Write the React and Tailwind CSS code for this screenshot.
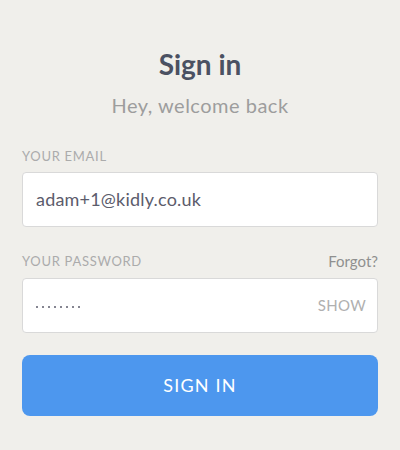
export default function App() {
  return (
    <div className="h-[450px] overflow-hidden bg-[#f0efeb] px-[22px] font-['Lato',sans-serif]">
      <div className="pt-[47px] text-center text-[28px] font-bold leading-[34px] text-[#4b5162]">Sign in</div>
      <div className="mt-[11px] text-center text-[20px] leading-[26px] tracking-[0.5px] text-[#9d9d9d]">Hey, welcome back</div>

      <div className="mt-[30px] text-[13px] leading-[16px] tracking-[0.7px] text-[#ababab]">YOUR EMAIL</div>
      <div className="mt-[8px] flex h-[55px] items-center rounded-[4px] border border-[#d9d9d9] bg-white px-[13px]">
        <span className="text-[18px] tracking-[0.2px] text-[#5c5c6c]">adam+1@kidly.co.uk</span>
      </div>

      <div className="mt-[26px] flex items-end justify-between">
        <span className="text-[13px] leading-[16px] tracking-[0.7px] text-[#ababab]">YOUR PASSWORD</span>
        <span className="text-[15px] leading-[16px] text-[#8f8f8f]">Forgot?</span>
      </div>
      <div className="mt-[9px] flex h-[55px] items-center justify-between rounded-[4px] border border-[#d9d9d9] bg-white pl-[13px] pr-[11px]">
        <div className="mt-[3px] flex gap-[4px]">
          <span className="h-[2px] w-[2px] rounded-full bg-[#5c5c6c]"></span>
          <span className="h-[2px] w-[2px] rounded-full bg-[#5c5c6c]"></span>
          <span className="h-[2px] w-[2px] rounded-full bg-[#5c5c6c]"></span>
          <span className="h-[2px] w-[2px] rounded-full bg-[#5c5c6c]"></span>
          <span className="h-[2px] w-[2px] rounded-full bg-[#5c5c6c]"></span>
          <span className="h-[2px] w-[2px] rounded-full bg-[#5c5c6c]"></span>
          <span className="h-[2px] w-[2px] rounded-full bg-[#5c5c6c]"></span>
          <span className="h-[2px] w-[2px] rounded-full bg-[#5c5c6c]"></span>
        </div>
        <span className="text-[15px] tracking-[0.3px] text-[#b0b0b0]">SHOW</span>
      </div>

      <button className="mt-[22px] flex h-[61px] w-full items-center justify-center rounded-[8px] bg-[#4d97ee] text-[18px] font-normal tracking-[1.2px] text-white">
        SIGN IN
      </button>

      <div className="mt-[30px] text-center text-[15px] leading-[20px] text-[#9d9d9d]">
        Not got an account yet? <span className="text-[#4b5162]">Sign up</span>
      </div>
    </div>
  );
}
